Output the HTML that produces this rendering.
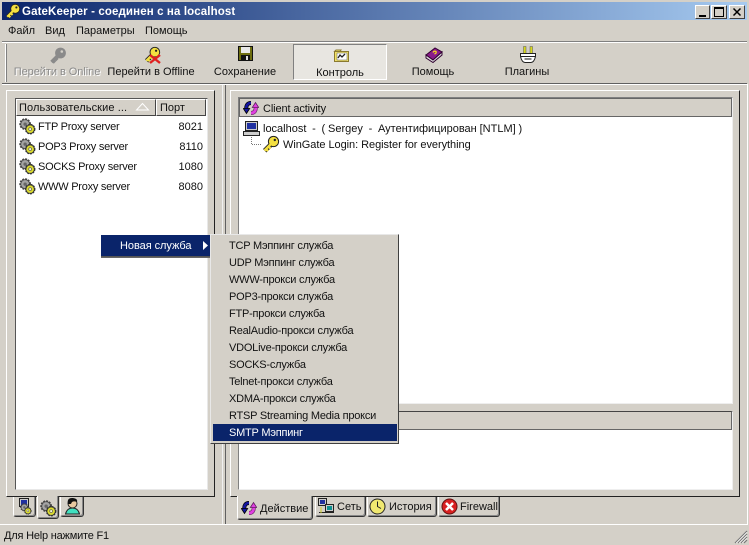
<!DOCTYPE html>
<html><head><meta charset="utf-8"><style>
html,body{margin:0;padding:0;background:#d4d0c8}
#w{position:relative;width:749px;height:545px;overflow:hidden;background:#d4d0c8;font:11px "Liberation Sans","Noto Sans CJK SC",sans-serif;color:#111}
.a{position:absolute}
.t{position:absolute;white-space:nowrap;line-height:14px}
.c{transform:translateX(-50%)}
.l{letter-spacing:-.25px}
svg{position:absolute;overflow:visible}
.hd{position:absolute;background:#d4d0c8;border:1px solid;border-color:#fff #555 #555 #fff;box-sizing:border-box}
.tab{position:absolute;background:#d4d0c8;box-sizing:border-box;border-right:1px solid #333;border-bottom:1px solid #333;border-left:1px solid #fff;border-radius:0 0 3px 3px;box-shadow:inset -1px -1px 0 #888}
.mi{left:229px;letter-spacing:-.22px}
.wb{position:absolute;top:5px;width:16px;height:14px;background:#d4d0c8;box-sizing:border-box;border:1px solid;border-color:#fff #404040 #404040 #fff}
</style></head><body><div id="w">
<svg width="0" height="0" style="position:absolute"><defs>
<symbol id="gear" viewBox="0 0 18 18"><circle cx="6.500" cy="6.500" r="5.300" fill="#555" stroke="#444" stroke-dasharray="2 1.100" stroke-width="1.800"/><circle cx="6.500" cy="6.500" r="4.200" fill="#a4a4a4"/><circle cx="6.500" cy="6.500" r="1.800" fill="#666"/><circle cx="11.800" cy="11.800" r="5" fill="#333" stroke="#333" stroke-dasharray="2 1" stroke-width="1.200"/><circle cx="11.800" cy="11.800" r="4" fill="#dcdc30"/><circle cx="11.800" cy="11.800" r="1.500" fill="#fafad0" stroke="#555" stroke-width=".7"/></symbol>
<symbol id="sync" viewBox="0 0 16 16"><path d="M8 3C4.500 3 3 5.500 3.300 9" fill="none" stroke="#000" stroke-width="4"/><path d="M8 3C4.500 3 3 5.500 3.300 9" fill="none" stroke="#1414a0" stroke-width="2.600"/><path d="M.3 8.500H6.700L3.500 13.500Z" fill="#1414a0" stroke="#000" stroke-width=".8"/><path d="M8 13C11.500 13 13 10.500 12.700 7" fill="none" stroke="#602060" stroke-width="4"/><path d="M8 13C11.500 13 13 10.500 12.700 7" fill="none" stroke="#e040e0" stroke-width="2.800"/><path d="M9.300 7.500H15.700L12.500 2.500Z" fill="#e040e0" stroke="#602060" stroke-width=".8"/></symbol>
<symbol id="key" viewBox="0 0 18 18"><path d="M9 9 2.500 15.500M4 14 6 16M6.500 11.500 8.500 13.500" fill="none" stroke="#222" stroke-width="4.200"/><circle cx="11.500" cy="6.500" r="5.600" fill="#222"/><path d="M9 9 2.500 15.500M4 14 6 16M6.500 11.500 8.500 13.500" fill="none" stroke="#f4e040" stroke-width="2.400"/><circle cx="11.500" cy="6.500" r="4.600" fill="#f4e040"/><circle cx="12.800" cy="5" r="1.200" fill="#222"/></symbol>
</defs></svg>

<!-- title -->
<div class="a" style="left:2px;top:2px;width:745px;height:18px;background:linear-gradient(90deg,#0a246a,#a6caf0)"></div>
<svg style="left:5px;top:3px" width="16" height="16"><use href="#key" width="16" height="16"/></svg>
<div class="t" style="left:22px;top:5px;color:#fff;font-weight:bold;font-size:11.500px;letter-spacing:.12px">GateKeeper - соединен с на localhost</div>
<div class="wb" style="left:695px;width:15px"><div class="a" style="left:3px;top:9px;width:7px;height:2px;background:#000"></div></div>
<div class="wb" style="left:711px"><div class="a" style="left:2px;top:1px;width:10px;height:10px;border:1px solid #000;border-top-width:2px;box-sizing:border-box"></div></div>
<div class="wb" style="left:729px"><svg style="left:3px;top:2px" width="9" height="8"><path d="M.5 .5 7.500 7.500M7.500 .5 .5 7.500" stroke="#000" stroke-width="1.500"/></svg></div>

<!-- menu -->
<div class="t" style="left:8px;top:24px">Файл</div>
<div class="t" style="left:45px;top:24px">Вид</div>
<div class="t" style="left:76px;top:24px">Параметры</div>
<div class="t" style="left:145px;top:24px">Помощь</div>
<div class="a" style="left:2px;top:41px;width:745px;height:1px;background:#808080"></div>
<div class="a" style="left:2px;top:42px;width:745px;height:1px;background:#fff"></div>

<!-- toolbar -->
<div class="a" style="left:5px;top:44px;width:1px;height:38px;background:#fff"></div>
<div class="a" style="left:6px;top:44px;width:1px;height:38px;background:#808080"></div>
<div class="a" style="left:293px;top:44px;width:94px;height:36px;box-sizing:border-box;border:1px solid;border-color:#808080 #fff #fff #808080;background:#e8e6e1"></div>

<svg style="left:49px;top:46px" width="18" height="18"><path d="M9 9.500 2.500 16M4 14.500 6 16.500M6.500 12 8.500 14" fill="none" stroke="#8a8a8a" stroke-width="3.400"/><circle cx="11.500" cy="7" r="5.400" fill="#8a8a8a"/><circle cx="12.800" cy="5.500" r="1.300" fill="#d4d0c8"/></svg>
<div class="t c" style="left:57px;top:65px;color:#8a8a8a;text-shadow:1px 1px 0 #fff;letter-spacing:-.05px">Перейти в Online</div>

<svg style="left:144px;top:46px" width="18" height="18"><use href="#key" width="17" height="17"/><path d="M6 9 16 17M16 9 6 17" stroke="#e02020" stroke-width="2.400"/></svg>
<div class="t c" style="left:151px;top:65px">Перейти в Offline</div>

<svg style="left:238px;top:46px" width="15" height="16"><rect x=".5" y=".5" width="14" height="14" fill="#6e6e10" stroke="#111"/><rect x="3" y="1" width="9" height="6" fill="#e8e8e8"/><rect x="3" y="9" width="9" height="6" fill="#111"/><rect x="8" y="10" width="2" height="4" fill="#ddd"/></svg>
<div class="t c" style="left:245px;top:65px">Сохранение</div>

<svg style="left:334px;top:49px" width="16" height="14"><path d="M.5 2.500H6L7 1H2ZM.5 2.500H14.500V12.500H.5Z" fill="#f4e468" stroke="#8a7a30"/><rect x="3" y="4" width="10" height="7" fill="#fff" stroke="#555" stroke-width=".5"/><path d="M4 9 6 6 8 8 11 5" stroke="#222" fill="none" stroke-width="1.300"/></svg>
<div class="t c" style="left:340px;top:66px">Контроль</div>

<svg style="left:425px;top:47px" width="18" height="16"><path d="M1 8 10 1 17 5 8 13Z" fill="#8a1a8a" stroke="#300030"/><path d="M1 8 1 11 8 15.500 17 8 17 5 8 13Z" fill="#ddd" stroke="#300030"/><path d="M8 5.500Q9 3.500 11 4.500Q12 6 9.500 7" stroke="#f0d020" fill="none" stroke-width="1.300"/></svg>
<div class="t c" style="left:433px;top:65px">Помощь</div>

<svg style="left:520px;top:46px" width="16" height="18"><rect x="3.500" y=".5" width="2.500" height="8" fill="#d8d820" stroke="#555" stroke-width=".5"/><rect x="10" y=".5" width="2.500" height="8" fill="#d8d820" stroke="#555" stroke-width=".5"/><path d="M.5 7.500H15.500V10.500Q14 16.500 11 16.500H5Q2 16.500 .5 10.500Z" fill="#fff" stroke="#222"/><path d="M.5 10.500H15.500" stroke="#222"/><rect x="4.500" y="12" width="7" height="2" fill="#888"/></svg>
<div class="t c" style="left:527px;top:65px">Плагины</div>

<div class="a" style="left:2px;top:83px;width:745px;height:1px;background:#606060"></div>
<div class="a" style="left:2px;top:84px;width:745px;height:1px;background:#fff"></div>
<div class="a" style="left:747px;top:84px;width:1px;height:441px;background:#fff"></div>

<!-- left panel -->
<div class="a" style="left:6px;top:90px;width:209px;height:407px;box-sizing:border-box;border:1px solid;border-color:#fff #222 #222 #fff"></div>
<div class="a" style="left:15px;top:98px;width:193px;height:392px;box-sizing:border-box;background:#fff;border:1px solid;border-color:#555 #e8e8e8 #e8e8e8 #555"></div>
<div class="hd" style="left:16px;top:99px;width:140px;height:17px;border-color:#fff #444 #444 #fff"></div>
<div class="hd" style="left:156px;top:99px;width:50px;height:17px;border-color:#fff #444 #444 #fff"></div>
<div class="t" style="left:19px;top:101px;letter-spacing:.1px">Пользовательские ...</div>
<svg style="left:136px;top:103px" width="13" height="8"><path d="M6.500 .5 .5 7H12.500Z" fill="none" stroke="#fff"/></svg>
<div class="t" style="left:160px;top:101px">Порт</div>

<svg style="left:19px;top:118px" width="17" height="17"><use href="#gear" width="17" height="17"/></svg>
<div class="t l" style="left:38px;top:120px">FTP Proxy server</div><div class="t" style="right:546px;top:120px">8021</div>
<svg style="left:19px;top:138px" width="17" height="17"><use href="#gear" width="17" height="17"/></svg>
<div class="t l" style="left:38px;top:140px">POP3 Proxy server</div><div class="t" style="right:546px;top:140px">8110</div>
<svg style="left:19px;top:158px" width="17" height="17"><use href="#gear" width="17" height="17"/></svg>
<div class="t l" style="left:38px;top:160px">SOCKS Proxy server</div><div class="t" style="right:546px;top:160px">1080</div>
<svg style="left:19px;top:178px" width="17" height="17"><use href="#gear" width="17" height="17"/></svg>
<div class="t l" style="left:38px;top:180px">WWW Proxy server</div><div class="t" style="right:546px;top:180px">8080</div>

<!-- splitter -->
<div class="a" style="left:225px;top:85px;width:1px;height:439px;background:#606060"></div>
<div class="a" style="left:222px;top:85px;width:1px;height:439px;background:#f0f0f0"></div>

<!-- right panel -->
<div class="a" style="left:230px;top:90px;width:510px;height:407px;box-sizing:border-box;border:1px solid;border-color:#fff #222 #222 #fff"></div>
<div class="a" style="left:238px;top:97px;width:495px;height:307px;box-sizing:border-box;background:#fff;border:1px solid;border-color:#808080 #eee #eee #808080"></div>
<div class="hd" style="left:239px;top:98px;width:493px;height:19px;border-color:#666 #666 #666 #666"></div>
<svg style="left:243px;top:100px" width="16" height="16"><use href="#sync" width="16" height="16"/></svg>
<div class="t" style="left:263px;top:102px;letter-spacing:-.12px">Client activity</div>
<svg style="left:243px;top:120px" width="17" height="17"><rect x="2.500" y="1.500" width="12" height="9" fill="#ccc" stroke="#222"/><rect x="4" y="3" width="9" height="6" fill="#2030a0"/><rect x=".5" y="11.500" width="16" height="4" fill="#ccc" stroke="#222"/></svg>
<div class="t" style="left:263px;top:122px;word-spacing:-.2px">localhost &nbsp;- &nbsp;( Sergey &nbsp;- &nbsp;Аутентифицирован [NTLM] )</div>
<svg style="left:251px;top:137px" width="12" height="10"><path d="M.5 0V7.500H11" fill="none" stroke="#777" stroke-dasharray="1 1"/></svg>
<svg style="left:262px;top:135px" width="18" height="18"><use href="#key" width="18" height="18"/></svg>
<div class="t" style="left:283px;top:138px;letter-spacing:-.05px">WinGate Login: Register for everything</div>

<div class="a" style="left:238px;top:411px;width:495px;height:79px;box-sizing:border-box;background:#fff;border:1px solid;border-color:#808080 #eee #eee #808080"></div>
<div class="hd" style="left:239px;top:411px;width:493px;height:19px;border-color:#444 #666 #666 #666"></div>

<!-- bottom tabs left -->
<div class="tab" style="left:13px;top:497px;width:23px;height:20px"></div>
<div class="tab" style="left:37px;top:496px;width:22px;height:23px;border-left:1px solid #fff"></div>
<div class="tab" style="left:60px;top:497px;width:24px;height:20px"></div>
<svg style="left:16px;top:498px" width="17" height="17"><rect x="3.500" y=".5" width="9" height="8" fill="#ccc" stroke="#222"/><rect x="5" y="2" width="6" height="5" fill="#2030a0"/><use href="#gear" x="4" y="5" width="12" height="12"/></svg>
<svg style="left:40px;top:500px" width="17" height="17"><use href="#gear" width="17" height="17"/></svg>
<svg style="left:64px;top:497px" width="17" height="18"><path d="M1.500 17Q3 11 8.500 11 14 11 15.500 17Z" fill="#40e0c0" stroke="#222"/><circle cx="8.500" cy="6.500" r="4.500" fill="#e8c8a0" stroke="#222"/><path d="M4 7Q2.500 .5 9 1 14 1.500 13 5 8 3 7 7Z" fill="#111"/></svg>

<!-- bottom tabs right -->
<div class="tab" style="left:237px;top:496px;width:76px;height:24px"></div>
<div class="tab" style="left:315px;top:497px;width:51px;height:20px"></div>
<div class="tab" style="left:367px;top:497px;width:70px;height:20px"></div>
<div class="tab" style="left:438px;top:497px;width:62px;height:20px"></div>
<svg style="left:241px;top:500px" width="16" height="16"><use href="#sync" width="16" height="16"/></svg>
<div class="t" style="left:260px;top:502px">Действие</div>
<svg style="left:318px;top:498px" width="17" height="17"><rect x=".5" y=".5" width="8" height="7" fill="#ccc" stroke="#222"/><rect x="2" y="2" width="5" height="4" fill="#2030a0"/><rect x="7.500" y="6.500" width="8" height="7" fill="#ccc" stroke="#222"/><rect x="9" y="8" width="5" height="4" fill="#109090"/><path d="M1 14.500H16" stroke="#222"/><path d="M3 9V15" stroke="#cc2"/></svg>
<div class="t" style="left:337px;top:500px">Сеть</div>
<svg style="left:369px;top:498px" width="17" height="17"><circle cx="8.500" cy="8.500" r="7.500" fill="#f0e870" stroke="#222"/><path d="M8.500 3.500V8.500L12 10.500" fill="none" stroke="#222"/></svg>
<div class="t" style="left:389px;top:500px">История</div>
<svg style="left:441px;top:498px" width="17" height="17"><circle cx="8.500" cy="8.500" r="7.500" fill="#d82020" stroke="#601010"/><path d="M5 5 12 12M12 5 5 12" stroke="#fff" stroke-width="2.500"/></svg>
<div class="t" style="left:460px;top:500px">Firewall</div>

<!-- status -->
<div class="a" style="left:0;top:524px;width:748px;height:1px;background:#fff"></div>
<div class="t" style="left:4px;top:529px;letter-spacing:-.2px">Для Help нажмите F1</div>
<svg style="left:733px;top:529px" width="15" height="15"><path d="M14 2 2 14M14 5 5 14M14 8 8 14M14 11 11 14" stroke="#777" stroke-width="1.200"/><path d="M14 3.200 3.200 14M14 6.200 6.200 14M14 9.200 9.200 14" stroke="#fff" stroke-width=".7"/></svg>

<!-- context menu -->
<div class="a" style="left:101px;top:235px;width:111px;height:22px;background:#0a246a;border-bottom:1px solid #555;box-shadow:0 1px 0 #666;box-sizing:border-box"></div>
<div class="t" style="left:120px;top:239px;color:#fff;letter-spacing:-.05px">Новая служба</div>
<svg style="left:203px;top:241px" width="5" height="9"><path d="M0 0 5 4.500 0 9Z" fill="#fff"/></svg>
<div class="a" style="left:210px;top:234px;width:189px;height:210px;box-sizing:border-box;background:#d4d0c8;border:1px solid;border-color:#e8e8e8 #404040 #404040 #e8e8e8"></div>
<div class="a" style="left:213px;top:424px;width:184px;height:17px;background:#0a246a"></div>
<div class="t mi" style="top:239px">TCP Мэппинг служба</div>
<div class="t mi" style="top:256px">UDP Мэппинг служба</div>
<div class="t mi" style="top:273px">WWW-прокси служба</div>
<div class="t mi" style="top:290px">POP3-прокси служба</div>
<div class="t mi" style="top:307px">FTP-прокси служба</div>
<div class="t mi" style="top:324px">RealAudio-прокси служба</div>
<div class="t mi" style="top:341px">VDOLive-прокси служба</div>
<div class="t mi" style="top:358px">SOCKS-служба</div>
<div class="t mi" style="top:375px">Telnet-прокси служба</div>
<div class="t mi" style="top:392px">XDMA-прокси служба</div>
<div class="t mi" style="top:409px">RTSP Streaming Media прокси</div>
<div class="t mi" style="top:426px;color:#fff">SMTP Мэппинг</div>
</div></body></html>
